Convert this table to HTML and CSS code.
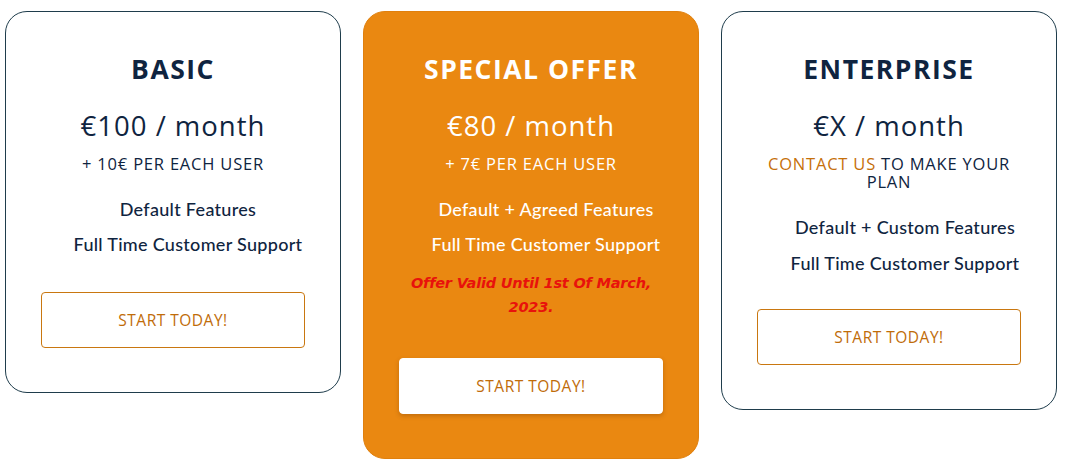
FILE: index.html
```html
<!DOCTYPE html>
<html>
<head>
<meta charset="utf-8">
<link rel="stylesheet" href="styles.css">
</head>
<body>
<div class="plans">
  <div class="card">
    <h2 class="title">BASIC</h2>
    <div class="price">€100 / month</div>
    <div class="sub">+ 10€ PER EACH USER</div>
    <ul class="features">
      <li>Default Features</li>
      <li>Full Time Customer Support</li>
    </ul>
    <a class="btn">START TODAY!</a>
  </div>
  <div class="card card-special">
    <h2 class="title">SPECIAL OFFER</h2>
    <div class="price">€80 / month</div>
    <div class="sub">+ 7€ PER EACH USER</div>
    <ul class="features">
      <li>Default + Agreed Features</li>
      <li>Full Time Customer Support</li>
    </ul>
    <p class="offer">Offer Valid Until 1st Of March, 2023.</p>
    <a class="btn btn-white">START TODAY!</a>
  </div>
  <div class="card">
    <h2 class="title">ENTERPRISE</h2>
    <div class="price">€X / month</div>
    <div class="sub"><span class="accent">CONTACT US</span> TO MAKE YOUR PLAN</div>
    <ul class="features features-tight">
      <li>Default + Custom Features</li>
      <li>Full Time Customer Support</li>
    </ul>
    <a class="btn btn-tight">START TODAY!</a>
  </div>
</div>
</body>
</html>
```
FILE: styles.css
```css
* { box-sizing: border-box; }
html, body { margin: 0; padding: 0; background: #fff; }
body {
  font-family: "Open Sans", "Noto Sans", sans-serif;
  color: #0f2440;
}
.plans {
  display: flex;
  align-items: flex-start;
  gap: 22px;
  padding: 11px 0 0 5px;
}
.card {
  width: 336px;
  border: 1px solid #1f3d4c;
  border-radius: 22px;
  padding: 0 35px 44px;
  text-align: center;
  background: #fff;
}
.card-special {
  background: #ea8811;
  border-color: #e0800e;
  color: #fff;
}
.title {
  margin: 42px 0 0;
  font-size: 26.5px;
  line-height: 30px;
  font-weight: 700;
  letter-spacing: 1.5px;
}
.price {
  margin-top: 25px;
  font-size: 27.5px;
  line-height: 34px;
  font-weight: 400;
  letter-spacing: 1px;
}
.sub {
  margin-top: 12px;
  font-size: 16.5px;
  line-height: 18px;
  font-weight: 500;
  letter-spacing: 0.8px;
}
.accent { color: #c6700a; }
.features {
  list-style: none;
  margin: 26px 0 0;
  padding: 0 0 0 30px;
  font-family: "Lato", "Open Sans", sans-serif;
  font-size: 18px;
  font-weight: 500;
  letter-spacing: 0.3px;
}
.features li {
  line-height: 20px;
}
.features li + li { margin-top: 15px; }
.features-tight { margin-top: 26px; padding-left: 32px; }
.features-tight li + li { margin-top: 16px; }
.offer {
  margin: 17px 0 0;
  font-family: "DejaVu Sans", sans-serif;
  font-weight: 700;
  font-style: italic;
  font-size: 14.5px;
  line-height: 24px;
  color: #e8120c;
  letter-spacing: -0.2px;
  padding: 0 5px;
}
.btn {
  display: flex;
  align-items: center;
  justify-content: center;
  height: 56px;
  margin-top: 38px;
  border: 1px solid #c97710;
  border-radius: 4px;
  color: #c06c09;
  font-size: 15.5px;
  font-weight: 400;
  letter-spacing: 0.5px;
  background: #fff;
}
.btn-white {
  margin-top: 39px;
  border-color: #fff;
  box-shadow: 0 2px 4px rgba(120, 60, 0, 0.35);
}
.btn-tight { margin-top: 36px; }
```
